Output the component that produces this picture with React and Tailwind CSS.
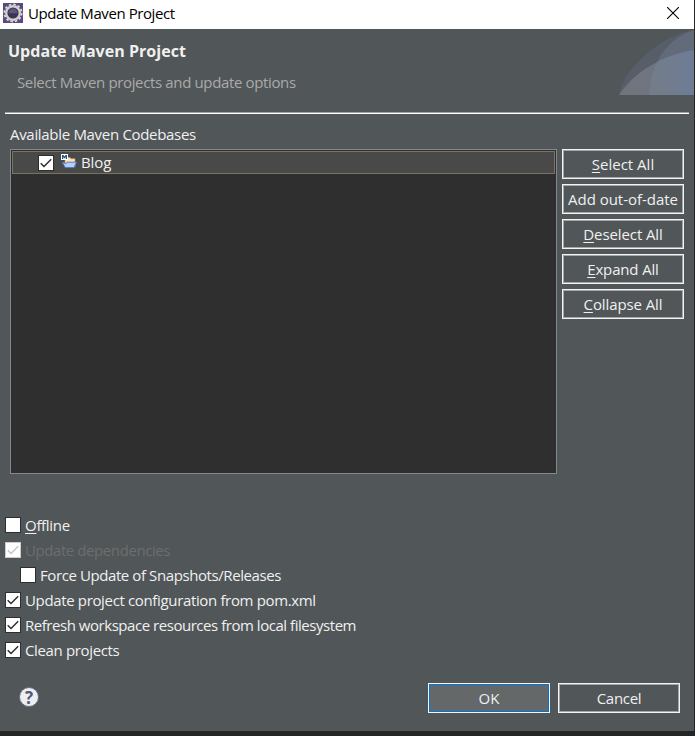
import React from "react";

const label = "font-['Open_Sans','Noto_Sans',sans-serif] leading-[20px] whitespace-nowrap";

function Check({ checked, disabled }) {
  return (
    <span className={"flex h-4 w-4 shrink-0 border bg-white " + (disabled ? "border-[#cccccc]" : "border-[#2e2e2e]")}>
      {checked && (
        <svg width="14" height="14" viewBox="0 0 14 14" fill="none" stroke={disabled ? "#c6c6c6" : "#2b2b2b"} strokeWidth="1.4">
          <path d="M1.7 7.2 5 10.5 12.2 3.3" />
        </svg>
      )}
    </span>
  );
}

function Option({ checked, disabled, indent, tracking, children }) {
  return (
    <div className={"flex h-[25px] items-start gap-1 pt-1 " + (indent ? "pl-5" : "pl-[5px]")}>
      <Check checked={checked} disabled={disabled} />
      <span className={label + " -mt-[2px] text-[15px] " + tracking + " " + (disabled ? "text-[#6d6d6d]" : "text-[#f0f0f0]")}>{children}</span>
    </div>
  );
}

function Button({ primary, tracking = "", children }) {
  return (
    <button className="flex h-[30px] w-[122px] shrink-0 border border-[#f4f4f4]">
      <span className={label + " flex h-full w-full items-center justify-center border pb-px text-[15px] text-[#f0f0f0] " + tracking + (primary ? " border-[#0078d7] bg-[#646869]" : " border-[#a5a7a7]")}>
        <span>{children}</span>
      </span>
    </button>
  );
}

function Key({ children }) {
  return <span className="underline decoration-1 underline-offset-2">{children}</span>;
}

function GearIcon() {
  return (
    <svg width="20" height="20" viewBox="0 0 20 20">
      <rect width="20" height="20" fill="#5b4a80" />
      <circle cx="10" cy="10" r="8.6" fill="none" stroke="#dedad6" strokeWidth="1.8" strokeDasharray="2.5 2" />
      <circle cx="10" cy="10" r="6.8" fill="#3a3357" stroke="#d0cdcb" strokeWidth="2.4" />
      <path d="M5.4 10.2a4.6 4.6 0 0 1 9.2 0z" fill="#5e5878" />
    </svg>
  );
}

function FolderIcon() {
  return (
    <svg width="16" height="16" viewBox="0 0 16 16">
      <path d="M4 13V3.5h5l1 1.2h4V13z" fill="#fbe3b4" stroke="#c99a5a" strokeWidth=".6" />
      <path d="M1.2 8.2 4.3 13.6H13L15.6 8.2H6L5.2 9.6z" fill="#b3cff8" stroke="#4c6fc5" strokeWidth=".9" />
      <rect width="7" height="6" fill="#fff" />
      <path d="M1 5V1h1.5l1 1.6L4.5 1H6v4H4.7V3L3.5 4.6 2.3 3v2z" fill="#1c5a94" />
    </svg>
  );
}

function Arcs() {
  return (
    <svg width="75" height="66" viewBox="0 0 75 66">
      <defs>
        <linearGradient id="arc" x1="0" x2="1">
          <stop offset="0" stopColor="#8c8a8e" stopOpacity=".5" />
          <stop offset=".55" stopColor="#858c98" stopOpacity=".5" />
          <stop offset="1" stopColor="#7385b0" stopOpacity=".55" />
        </linearGradient>
      </defs>
      <path d="M0 66C3 43 38 7 75 1V66z" fill="#70789a" fillOpacity=".25" />
      <path d="M0 66C16 42 44 26 75 21V66z" fill="url(#arc)" />
      <path d="M30 66C31 39 45 10 75 1V66z" fill="#7f92aa" fillOpacity=".25" />
    </svg>
  );
}

export default function App() {
  return (
    <div className="flex h-[736px] w-[695px] flex-col overflow-hidden border-r border-[#252525] bg-[#515658]">
      <header className="flex h-[29px] shrink-0 items-center bg-white pl-[3px] pr-[15px]">
        <div className="-mt-[3px]"><GearIcon /></div>
        <span className={label + " -mt-[4px] ml-[5px] grow text-[15px] tracking-[-0.42px] text-black"}>Update Maven Project</span>
        <svg className="-mt-[3px]" width="12" height="12" viewBox="0 0 12 12" stroke="#000" strokeWidth="1.1">
          <path d="M0 0 12 12M12 0 0 12" />
        </svg>
      </header>

      <section className="flex h-[83px] shrink-0 justify-between">
        <div>
          <h1 className={label + " mt-3 ml-2 text-[16px] font-bold tracking-[0.03px] text-[#f0f0f0]"}>Update Maven Project</h1>
          <p className={label + " mt-[11px] ml-[17px] text-[15px] tracking-[-0.36px] text-[#aaaaaa]"}>Select Maven projects and update options</p>
        </div>
        <Arcs />
      </section>
      <div className="mr-[5px] ml-[5px] h-[2px] shrink-0 border-t border-[#a0a0a0] bg-white" />

      <main className="flex h-[360px] shrink-0 pl-[10px]">
        <div>
          <div className={label + " mt-[10px] h-[25px] text-[15px] tracking-[-0.31px] text-[#f0f0f0]"}>Available Maven Codebases</div>
          <div className="h-[325px] w-[547px] border border-[#828790] bg-[#2f2f2f] p-px">
            <div className="flex h-[23px] items-start border border-[#77745f] bg-[#494949] pl-[25px]">
              <div className="mt-[3px]"><Check checked /></div>
              <div className="mt-[2px] ml-[7px]"><FolderIcon /></div>
              <span className={label + " ml-1 text-[15px] tracking-[-0.1px] text-[#f0f0f0]"}>Blog</span>
            </div>
          </div>
        </div>
        <div className="mt-[35px] ml-[5px] flex flex-col gap-[5px]">
          <Button><Key>S</Key>elect All</Button>
          <Button tracking="tracking-[-0.03px]">Add out-of-date</Button>
          <Button tracking="tracking-[-0.1px]"><Key>D</Key>eselect All</Button>
          <Button tracking="tracking-[-0.15px]"><Key>E</Key>xpand All</Button>
          <Button tracking="tracking-[-0.1px]"><Key>C</Key>ollapse All</Button>
        </div>
      </main>

      <section className="mt-[39px]">
        <Option tracking="tracking-[-0.3px]"><Key>O</Key>ffline</Option>
        <Option tracking="tracking-[-0.42px]" checked disabled>Update dependencies</Option>
        <Option tracking="tracking-[-0.41px]" indent>Force Update of Snapshots/Releases</Option>
        <Option tracking="tracking-[-0.35px]" checked>Update project configuration from pom.xml</Option>
        <Option tracking="tracking-[-0.46px]" checked>Refresh workspace resources from local filesystem</Option>
        <Option tracking="tracking-[-0.35px]" checked>Clean projects</Option>
      </section>

      <footer className="mt-5 flex h-[30px] shrink-0 items-start pr-[14px] pl-[19px]">
        <span className="mt-1 flex h-5 w-5 items-center justify-center rounded-full border border-[#64718f] bg-[#eeeeee] font-['Open_Sans',sans-serif] text-[17px] leading-none font-bold text-[#4d5a80]">?</span>
        <div className="ml-auto flex gap-2">
          <Button primary>OK</Button>
          <Button tracking="tracking-[-0.3px]">Cancel</Button>
        </div>
      </footer>
      <div className="mt-auto h-[5px] shrink-0 bg-[#252525]" />
    </div>
  );
}
